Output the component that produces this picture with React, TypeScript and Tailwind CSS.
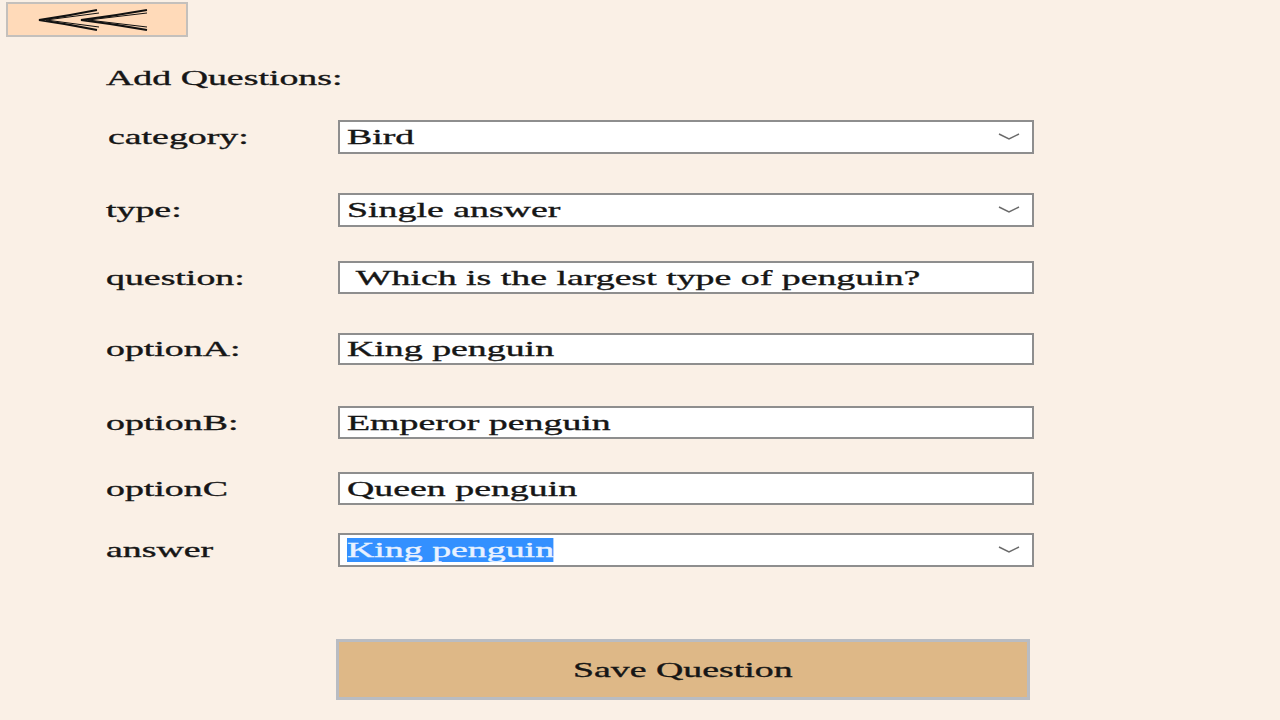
import React from "react";

const S = ({ children, className = "" }: { children: React.ReactNode; className?: string }) => (
  <span className={"inline-block origin-left scale-x-[1.72] whitespace-pre " + className}>{children}</span>
);

const Chevron = () => (
  <svg width="22" height="10" viewBox="0 0 22 10" className="absolute right-[12px] top-1/2 -translate-y-1/2">
    <path d="M1 2 L11 7 L21 2" fill="none" stroke="#6b6b6b" strokeWidth="1.5" />
  </svg>
);

const Field = ({
  children,
  h,
  select,
}: {
  children: React.ReactNode;
  h: string;
  select?: boolean;
}) => (
  <div
    className={
      "relative w-[696px] bg-white border-2 border-[#8e8e8e] flex items-center pl-[7px] leading-none " + h
    }
  >
    {children}
    {select && <Chevron />}
  </div>
);

const Row = ({
  label,
  children,
  mt,
  lpad = "",
}: {
  label: string;
  children: React.ReactNode;
  mt: string;
  lpad?: string;
}) => (
  <div className={"flex items-center " + mt}>
    <div className={"w-[232px] leading-none " + lpad}>
      <S>{label}</S>
    </div>
    {children}
  </div>
);

export default function App() {
  return (
    <div className="min-h-screen bg-[#faf0e6] text-[22px] text-[#161616] [-webkit-text-stroke:0.35px_#161616] font-['Liberation_Serif',serif] overflow-hidden">
      <div className="pl-[6px] pt-[2px]">
        <div className="w-[182px] h-[35px] bg-[#ffdab9] border-2 border-[#c4c0bc] flex items-center justify-center">
          <svg width="112" height="24" viewBox="0 0 112 24" className="-ml-[8px]">
            <path d="M60 2 Q30 8 2 12 Q30 16 60 22" fill="none" stroke="#111" strokeWidth="2.2" />
            <path d="M62 5 L9 12 L62 19" fill="none" stroke="#111" strokeWidth="1" />
            <path d="M110 2 Q76 8 44 12 Q76 16 110 22" fill="none" stroke="#111" strokeWidth="2.2" />
            <path d="M110 5 L51 12 L110 19" fill="none" stroke="#111" strokeWidth="1" />
          </svg>
        </div>
      </div>

      <div className="pl-[106px]">
        <div className="mt-[30px] leading-none h-[24px]">
          <S>Add Questions:</S>
        </div>

        <Row label="category:" mt="mt-[29px]" lpad="pl-[2px]">
          <Field h="h-[34px]" select>
            <S>Bird</S>
          </Field>
        </Row>

        <Row label="type:" mt="mt-[39px]">
          <Field h="h-[34px]" select>
            <S>Single answer</S>
          </Field>
        </Row>

        <Row label="question:" mt="mt-[34px]">
          <Field h="h-[33px]">
            <S> Which is the largest type of penguin?</S>
          </Field>
        </Row>

        <Row label="optionA:" mt="mt-[39px]">
          <Field h="h-[32px]">
            <S>King penguin</S>
          </Field>
        </Row>

        <Row label="optionB:" mt="mt-[41px]">
          <Field h="h-[33px]">
            <S>Emperor penguin</S>
          </Field>
        </Row>

        <Row label="optionC" mt="mt-[33px]">
          <Field h="h-[33px]">
            <S>Queen penguin</S>
          </Field>
        </Row>

        <Row label="answer" mt="mt-[28px]">
          <Field h="h-[34px]" select>
            <span className="inline-block origin-left scale-x-[1.72] whitespace-pre bg-[#3390ff] text-[#e8f2ff] [-webkit-text-stroke:0.35px_#e8f2ff] py-[1px]">
              King penguin
            </span>
          </Field>
        </Row>

        <div className="mt-[72px] ml-[230px] w-[694px] h-[61px] border-[3px] border-[#b9bcc2] bg-[#deb887] flex items-center justify-center leading-none">
          <span className="inline-block origin-center scale-x-[1.72] whitespace-pre">Save Question</span>
        </div>
      </div>
    </div>
  );
}
